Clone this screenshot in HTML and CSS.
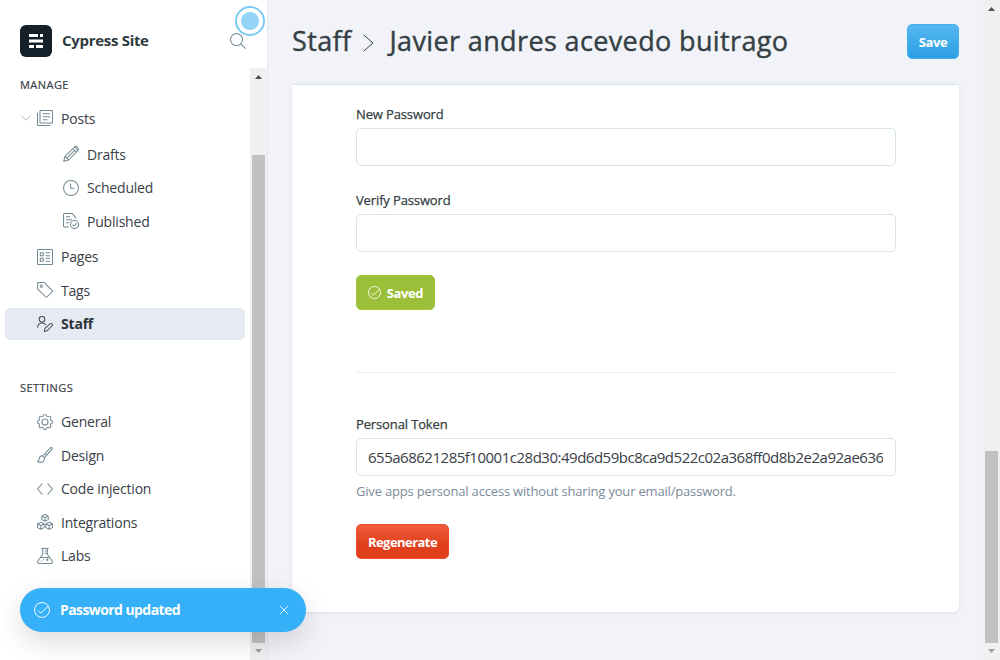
FILE: index.html
```html
<!DOCTYPE html>
<html lang="en">
<head>
<meta charset="utf-8">
<title>Cypress Site</title>
<link rel="stylesheet" href="styles.css">
</head>
<body>
<div class="app">
  <aside class="sidebar">
    <header class="site">
      <svg class="site-logo" viewBox="0 0 32 32"><rect width="32" height="32" rx="6" fill="#15212a"/><path fill="#fff" d="M9 9h9v3H9zM20 9h3v3h-3zM9 14.5h14v3H9zM9 20h5v3H9zM16 20h7v3h-7z"/></svg>
      <span class="site-name">Cypress Site</span>
      <svg class="icon search" viewBox="0 0 24 24"><circle cx="9.8" cy="9.8" r="9"/><path d="M16.2 16.2l7.3 7.3"/></svg>
    </header>
    <div class="sidebar-body">
      <nav class="nav">
        <h2 class="nav-title">Manage</h2>
        <a class="item posts"><svg class="chevron" viewBox="0 0 10 6"><path d="M.5.7L5 5.2 9.5.7"/></svg><svg class="icon" viewBox="0 0 24 24"><rect x="4.5" y=".75" width="18.8" height="18.8" rx="1"/><path d="M.75 4v17.7c0 1 .6 1.6 1.6 1.6H20M8.500 5.500h11M8.500 10h11M8.500 14.500h7"/></svg><span>Posts</span></a>
        <a class="item sub first"><svg class="icon" viewBox="0 0 24 24"><path d="M1 23l2-7.500L17.200 1.800c1.200-1.200 3-1.200 4.200 0l.8.8c1.200 1.200 1.200 3 0 4.200L8.500 21zM3 15.500l5.500 5.500M15 4l5 5M17.600 1.500l5 5M5.700 18.200L17.500 6.500M1.500 21l1.500 1.500"/></svg><span>Drafts</span></a>
        <a class="item sub"><svg class="icon" viewBox="0 0 24 24"><circle cx="12" cy="12" r="11.200"/><path d="M11.500 5.500v7H17"/></svg><span>Scheduled</span></a>
        <a class="item sub"><svg class="icon" viewBox="0 0 24 24"><path d="M8.500 21H2.200C1.300 21 .8 20.500.8 19.600V2.200C.8 1.300 1.300.8 2.200.8h11.600l4.500 4.500v3.500M4.500 5.500h6M4.500 10h9M4.500 14.500h5"/><circle cx="17.300" cy="17.300" r="6"/><path d="M14.500 17.500l2 2 3.800-4.200"/></svg><span>Published</span></a>
        <a class="item after-sub"><svg class="icon" viewBox="0 0 24 24"><rect x=".75" y=".75" width="22.500" height="22.500" rx="1"/><path d="M5 5.500h4.500V10H5zM5 14h4.500v4.500H5zM13 5.500h6.500M13 10h6.500M13 14h6.500M13 18.500h6.500"/></svg><span>Pages</span></a>
        <a class="item"><svg class="icon" viewBox="0 0 24 24"><path d="M1 2.200C1 1.400 1.500.8 2.300.8H10c.6 0 1 .2 1.400.6l11.500 11.400c.5.5.5 1.300 0 1.800l-7.800 7.900c-.5.5-1.300.5-1.800 0L1.500 11.200c-.3-.4-.5-.8-.5-1.300z"/><circle cx="6.500" cy="6.300" r="1.700"/></svg><span>Tags</span></a>
        <a class="item active"><svg class="icon" viewBox="0 0 24 24"><circle cx="7.500" cy="5" r="4.200"/><path d="M.8 17.500c0-4.200 2.500-7 6.700-7 2.800 0 4.900 1.100 6 3M11 23.200l1-4.700 7.400-6.700c1-.9 2.300-.8 3.100.1.900 1 .8 2.200-.1 3.100l-7 7z"/></svg><span>Staff</span></a>
        <h2 class="nav-title settings">Settings</h2>
        <a class="item"><svg class="icon" viewBox="0 0 24 24"><circle cx="12" cy="12" r="4.500"/><path d="M9.600 2.500c.7-2.300 4.100-2.300 4.800 0 .3 1.300 1.600 2 2.900 1.400 2.300-1.300 4.300.9 3.200 3-.8 1.300-.2 2.500 1.200 3 2.200.7 2.200 3.600 0 4.300-1.400.5-2 1.700-1.200 3 1.100 2.100-.9 4.300-3.200 3-1.300-.6-2.600.1-2.900 1.400-.7 2.300-4.100 2.300-4.800 0-.3-1.300-1.600-2-2.900-1.400-2.300 1.300-4.300-.9-3.200-3 .8-1.300.2-2.500-1.200-3-2.200-.7-2.200-3.600 0-4.300 1.400-.5 2-1.700 1.200-3-1.100-2.100.9-4.300 3.200-3 1.300.6 2.600-.1 2.900-1.400z"/></svg><span>General</span></a>
        <a class="item"><svg class="icon" viewBox="0 0 24 24"><path d="M8.500 13.500l2.500 2.500L22.500 3.500c1.400-1.800-.7-3.700-2.300-2.300zM8.500 13.500c-2-.5-3.800.4-4.500 2.300-.8 2.200-.5 4.300-3 6.200 3.500 1.500 7.500 1 9.200-1.500 1-1.500 1.200-3 .8-4.500M12 9.700l3 2.500"/></svg><span>Design</span></a>
        <a class="item"><svg class="icon" viewBox="0 0 24 24"><path d="M8 4L.8 12 8 20M16 4l7.200 8L16 20"/></svg><span>Code injection</span></a>
        <a class="item"><svg class="icon" viewBox="0 0 24 24"><path d="M12 .8l4.800 2.400v5.300L12 11 7.200 8.500V3.200zM7.200 3.200L12 5.700l4.800-2.500M12 5.700V11M5.800 12.200l4.900 2.400v5.800L5.800 23 .9 20.400v-5.800zM.9 14.600l4.900 2.600 4.900-2.600M5.800 17.200V23M18.200 12.200l4.900 2.400v5.800L18.200 23l-4.900-2.600v-5.800zM13.300 14.600l4.900 2.600 4.900-2.600M18.200 17.200V23"/></svg><span>Integrations</span></a>
        <a class="item"><svg class="icon" viewBox="0 0 24 24"><path d="M6.500.8h11M8.500.8v8.500L1.300 19.500c-1.200 1.700-.2 3.700 1.700 3.700h18c1.900 0 2.900-2 1.700-3.700L15.500 9.300V.8M11.500 4.500h4M11.500 8h4M5 14.200h14M15.500 15.500v4M13.500 17.500h4M6 19.500h1.500M10 17v1.500"/></svg><span>Labs</span></a>
      </nav>
      <div class="scrollbar side-scroll"><i class="arrow up"></i><i class="thumb"></i><i class="arrow down"></i></div>
    </div>
  </aside>
  <main class="main">
    <div class="content">
      <header class="page-head">
        <h1 class="title"><span class="crumb">Staff</span><svg class="sep" viewBox="0 0 11 18"><path d="M.6.8L10 9 .6 17.200"/></svg><span class="user">Javier andres acevedo buitrago</span></h1>
        <button class="btn save">Save</button>
      </header>
      <section class="card">
        <label class="label">New Password</label>
        <div class="input"></div>
        <label class="label second">Verify Password</label>
        <div class="input"></div>
        <button class="btn saved"><svg class="check" viewBox="0 0 24 24"><circle cx="12" cy="12" r="11.200"/><path d="M6 12.500l4.300 4.300L22 5.500"/></svg><span>Saved</span></button>
        <hr class="rule">
        <label class="label">Personal Token</label>
        <div class="input"><span class="token">655a68621285f10001c28d30:49d6d59bc8ca9d522c02a368ff0d8b2e2a92ae636</span></div>
        <p class="help">Give apps personal access without sharing your email/password.</p>
        <button class="btn regenerate">Regenerate</button>
      </section>
    </div>
    <div class="scrollbar main-scroll"><i class="arrow up"></i><i class="thumb"></i><i class="arrow down"></i></div>
  </main>
</div>
<div class="toast"><svg class="check" viewBox="0 0 24 24"><circle cx="12" cy="12" r="11.200"/><path d="M6 12.500l4.300 4.300L21 6.500"/></svg><span class="toast-text">Password updated</span><svg class="close" viewBox="0 0 10 10"><path d="M1 1l8 8M9 1L1 9"/></svg></div>
<div class="pointer"></div>
</body>
</html>
```

FILE: styles.css
```css
* { box-sizing: border-box; }
body {
  margin: 0;
  width: 1000px;
  height: 660px;
  overflow: hidden;
  font-family: "Open Sans", "Noto Sans", sans-serif;
  color: #394047;
}
.app { display: flex; height: 660px; }
svg { fill: none; flex: none; }

.sidebar {
  flex: none;
  width: 268px;
  border-right: 1px solid #e5eaf0;
  background: #fff;
  display: flex;
  flex-direction: column;
}
.site { height: 68px; padding: 14px 0 1px 20px; display: flex; align-items: center; }
.site-logo { width: 32px; height: 32px; }
.site-name { margin: 0 0 2px 10px; width: 168px; font-size: 15px; font-weight: 700; color: #2f3940; letter-spacing: -.3px; white-space: nowrap; }
.icon { width: 16px; height: 16px; stroke: #738a94; stroke-width: 1.55; stroke-linejoin: round; }
.sidebar-body { flex: 1; display: flex; min-height: 0; }
.nav { width: 250px; padding: 8px 5px 0; }
.nav-title {
  margin: 0 0 8px;
  padding-left: 15px;
  font-size: 11px;
  line-height: 18px;
  font-weight: 500;
  letter-spacing: .45px;
  text-transform: uppercase;
  -webkit-text-stroke: .2px;
}
.nav-title.settings { margin: 39px 0 9px; }
.item {
  display: flex;
  align-items: center;
  height: 32px;
  margin-bottom: 1.5px;
  padding-left: 32px;
  border-radius: 5px;
  font-size: 14px;
  letter-spacing: -.2px;
  white-space: nowrap;
  color: #394047;
}
.item span { margin-left: 8px; }
.posts { padding-left: 16px; }
.chevron { width: 10px; height: 6px; margin-right: 6px; stroke: #abb4be; }
.sub { padding-left: 58px; }
.sub.first { margin-top: 4px; }
.after-sub { margin-top: 3.5px; }
.active { background: #e6eaf2; font-weight: 700; color: #2b343b; }
.active .icon { stroke: #465057; }

.scrollbar {
  flex: none;
  width: 17px;
  background: #f0f0f0;
  display: flex;
  flex-direction: column;
  align-items: center;
}
.arrow { width: 7px; height: 4px; }
.arrow.up { background: #505050; clip-path: polygon(50% 0, 100% 100%, 0 100%); margin-top: 7px; }
.arrow.down { background: #a0a0a0; clip-path: polygon(0 0, 100% 0, 50% 100%); margin-top: 6px; }
.thumb { width: 13px; background: #c1c1c1; }
.side-scroll .thumb { height: 488px; margin-top: 76px; }
.main-scroll .thumb { height: 192px; margin-top: 440px; }

.main { flex: 1; min-width: 0; display: flex; background: #f1f3f8; }
.content { flex: 1; min-width: 0; padding: 0 24px; }
.page-head { height: 84px; padding-bottom: 1px; display: flex; align-items: center; justify-content: space-between; }
.title { margin: 0; padding-bottom: 1px; display: flex; align-items: center; font-size: 27px; line-height: 38px; font-weight: 500; letter-spacing: .37px; color: #343f44; white-space: nowrap; -webkit-text-stroke: .4px; }
.sep { width: 11px; height: 18px; margin: 3px 15px 0 12px; stroke: #343f44; }
.btn {
  display: flex;
  align-items: center;
  justify-content: center;
  height: 35px;
  padding: 0;
  border: 1px solid;
  border-radius: 5px;
  font: 700 13px "Open Sans", "Noto Sans", sans-serif;
  letter-spacing: -.4px;
  color: #fff;
}
.save { width: 52px; background: linear-gradient(#56b8f0, #2b9fe3); border-color: #44b0ef; }
.card {
  height: 528px;
  padding: 19px 63px 0 64px;
  background: #fff;
  border-top: 1px solid #dae6ee;
  border-radius: 0 0 5px 5px;
  box-shadow: 0 0 1px rgba(0,0,0,.14), 0 2px 5px rgba(0,0,0,.05);
}
.label { display: block; height: 20px; margin-bottom: 4px; font-size: 13px; line-height: 20px; font-weight: 500; letter-spacing: -.13px; color: #343f44; -webkit-text-stroke: .25px; }
.label.second { margin-top: 24px; }
.input { display: flex; align-items: center; width: 540px; height: 38px; padding: 0 12px 0 11px; border: 1px solid #d6e3eb; border-radius: 5px; }
.token { width: 515px; overflow: hidden; font-size: 15px; letter-spacing: -.49px; white-space: nowrap; color: #394047; }
.saved { width: 79px; margin-top: 23px; gap: 6px; background: #9bbf39; border-color: #a1c93d; }
.check { width: 13px; height: 13px; stroke: #fff; stroke-width: 1.6; }
.rule { margin: 62px 0 41px; border: 0; height: 1px; background: #e5eff5; }
.help { margin: 5px 0 23px; font-size: 13px; line-height: 20px; letter-spacing: -.18px; color: #7c8b9a; white-space: nowrap; }
.regenerate { width: 93px; background: linear-gradient(#f15c3d, #df3f1c 60%); border-color: #e64c2b; letter-spacing: -.55px; }

.toast {
  position: absolute;
  left: 20px;
  top: 588px;
  width: 286px;
  height: 44px;
  padding: 0 17px 0 14px;
  display: flex;
  align-items: center;
  border-radius: 22px;
  background: #35b0f9;
  color: #fff;
  font-size: 14px;
  font-weight: 700;
  letter-spacing: -.58px;
  box-shadow: 0 0 1px rgba(0,0,0,.1), 0 10px 28px rgba(0,0,0,.14);
}
.toast .check { width: 16px; height: 16px; stroke-width: 1.4; }
.toast-text { margin: 0 0 1px 10px; white-space: nowrap; }
.close { width: 10px; height: 10px; margin-left: auto; stroke: #d8effe; }
.pointer {
  position: absolute;
  left: 235px;
  top: 6px;
  width: 30px;
  height: 30px;
  border: 2px solid #7bcaf3;
  border-radius: 50%;
  background: radial-gradient(circle, #94d4f6 0 8.500px, #fff 9.500px);
}
```
